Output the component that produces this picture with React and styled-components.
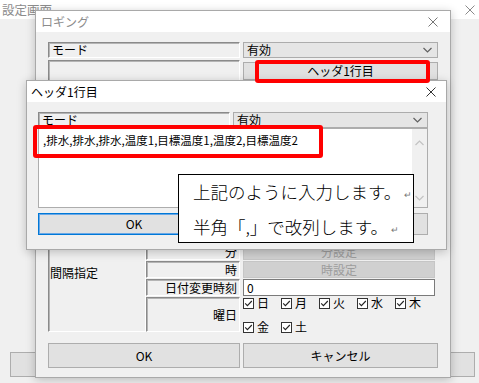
import React from 'react';
import styled, { createGlobalStyle } from 'styled-components';

const GlobalStyle = createGlobalStyle`
  html, body { margin: 0; padding: 0; background: #f0f0f0; }
  body {
    font-family: "Noto Sans CJK JP", "Noto Sans", sans-serif;
    font-size: 12px;
    color: #000;
    overflow: hidden;
  }
`;

const Desktop = styled.div`
  position: relative;
  width: 479px;
  height: 383px;
  overflow: hidden;
  background: #f0f0f0;
`;

// windows sit on a free canvas, so they are placed by coordinates
const Window = styled.div`
  position: absolute;
  left: ${p => p.$x}px;
  top: ${p => p.$y}px;
  width: ${p => p.$w}px;
  height: ${p => p.$h}px;
  box-sizing: border-box;
  display: flex;
  flex-direction: column;
  background: #f0f0f0;
  border: ${p => (p.$frameless ? 'none' : '1px solid #a9a9a9')};
  box-shadow: ${p => (p.$frameless ? 'none' : '0 2px 9px rgba(0,0,0,0.22)')};
`;

const TitleBar = styled.div`
  flex: none;
  height: ${p => p.$h}px;
  background: #fff;
  display: flex;
  align-items: center;
  justify-content: space-between;
  padding: 0 ${p => p.$pr}px 0 ${p => p.$pl}px;
  color: ${p => (p.$active ? '#000' : '#8c8c8c')};
  font-size: ${p => p.$fs || 12}px;
`;

const CloseIcon = ({ color = '#555' }) => (
  <svg width="10" height="10" viewBox="0 0 10 10">
    <path d="M0.5 0.5 L9.5 9.5 M9.5 0.5 L0.5 9.5" stroke={color} strokeWidth="1" fill="none" />
  </svg>
);

const Chevron = ({ up, color = '#606060' }) => (
  <svg width="9" height="6" viewBox="0 0 9 6">
    <path d={up ? 'M0.5 5 L4.5 1 L8.5 5' : 'M0.5 1 L4.5 5 L8.5 1'} stroke={color} strokeWidth="1.2" fill="none" />
  </svg>
);

/* back window */
const BackBody = styled.div`
  flex: 1;
  display: flex;
  align-items: flex-end;
  justify-content: space-between;
  padding: 0 4px 6px 10px;
`;

const BackButton = styled.div`
  width: 60px;
  height: 25px;
  box-sizing: border-box;
  background: #e1e1e1;
  border: 1px solid #adadad;
`;

/* shared controls */
const Row = styled.div`
  display: grid;
  grid-template-columns: 192px 195px;
  column-gap: 3px;
  height: ${p => p.$h}px;
  flex: none;
`;

const LabelBox = styled.div`
  box-sizing: border-box;
  height: 100%;
  border: 1px solid #fff;
  border-top-color: #8a8a8a;
  border-left-color: #8a8a8a;
  box-shadow: inset 1px 1px 0 #b4b4b4;
  display: flex;
  align-items: ${p => p.$align || 'center'};
  justify-content: ${p => (p.$right ? 'flex-end' : 'flex-start')};
  padding: ${p => p.$pad || '0 2px 0 3px'};
  line-height: 1;
  white-space: nowrap;
  overflow: hidden;
`;

const Select = styled.div`
  box-sizing: border-box;
  height: 100%;
  background: #e5e5e5;
  border: 1px solid #acacac;
  display: flex;
  align-items: center;
  justify-content: space-between;
  padding: 0 5px 0 3px;
  line-height: 1;
`;

const Button = styled.div`
  box-sizing: border-box;
  height: ${p => p.$h || 22}px;
  flex: none;
  background: ${p => (p.$disabled ? '#d0d0d0' : '#e1e1e1')};
  color: ${p => (p.$disabled ? '#9c9c9c' : '#000')};
  border: 1px solid ${p => (p.$focus ? '#0078d7' : p.$disabled ? '#c6c6c6' : '#adadad')};
  box-shadow: ${p => (p.$focus ? 'inset 0 0 0 1px #6aa8e6' : 'none')};
  display: flex;
  align-items: center;
  justify-content: center;
  line-height: 1;
  font-size: 12px;
`;

const TextInput = styled.div`
  box-sizing: border-box;
  height: 100%;
  background: #fff;
  border: 1px solid #7a7a7a;
  display: flex;
  align-items: center;
  padding-left: 3px;
  line-height: 1;
`;

/* logging window */
const LogBody = styled.div`
  flex: 1;
  display: flex;
  flex-direction: column;
  gap: 2px;
  padding: 10px 12px 9px 12px;
`;

const ButtonStack = styled.div`
  display: flex;
  flex-direction: column;
  gap: 2px;
  padding-top: 2px;
`;

const GroupGrid = styled.div`
  display: grid;
  grid-template-columns: 98px 94px 195px;
  grid-template-rows: 17px 17px 17px 35px;
  row-gap: 1px;
  height: 90px;
  flex: none;

  & > .right { margin-left: 3px; }
`;

const DayList = styled.div`
  display: flex;
  flex-wrap: wrap;
  row-gap: 12px;
  align-content: flex-start;
`;

const Day = styled.div`
  width: 38px;
  height: 12px;
  display: flex;
  align-items: center;
  gap: 3px;
  line-height: 1;
`;

const CheckBox = () => (
  <svg width="11" height="11" viewBox="0 0 11 11">
    <rect x="0.5" y="0.5" width="10" height="10" fill="#fff" stroke="#333" strokeWidth="1" />
    <path d="M2.2 5.4 L4.4 7.7 L8.8 3" stroke="#222" strokeWidth="1.1" fill="none" />
  </svg>
);

const ButtonRow = styled(Row)`
  margin-top: 8px;
`;

/* header dialog */
const DlgBody = styled.div`
  flex: 1;
  display: flex;
  flex-direction: column;
  padding: 10px 18px 0 11px;
`;

const TextArea = styled.div`
  box-sizing: border-box;
  height: 80px;
  flex: none;
  background: #fff;
  border: 1px solid #adadad;
  display: flex;
`;

const AreaText = styled.div`
  flex: 1;
  padding: 4px 4px;
  font-size: 11.5px;
  line-height: 14px;
  white-space: nowrap;
`;

const ScrollBar = styled.div`
  width: 15px;
  background: #f0f0f0;
  display: flex;
  flex-direction: column;
  align-items: center;
  justify-content: space-between;
  padding: 11px 0 6px;
`;

const DlgButtons = styled(Row)`
  margin-top: 5px;
`;

/* annotations on top */
const Marker = styled.div`
  position: absolute;
  left: ${p => p.$x}px;
  top: ${p => p.$y}px;
  width: ${p => p.$w}px;
  height: ${p => p.$h}px;
  box-sizing: border-box;
  border: 4px solid #ff0000;
  border-radius: 3px;
`;

const Callout = styled.div`
  position: absolute;
  left: 178px;
  top: 174px;
  width: 236px;
  height: 69px;
  box-sizing: border-box;
  background: #fff;
  border: 1px solid #000;
  padding: 4px 0 0 14px;
  display: flex;
  flex-direction: column;
  gap: 6px;
`;

const CalloutLine = styled.div`
  font-size: 17.5px;
  line-height: 25px;
  font-weight: 300;
  white-space: nowrap;
  color: #000;
`;

const Ret = styled.span`
  font-family: "DejaVu Sans", sans-serif;
  font-size: 9px;
  color: #777;
  margin-left: 3px;
  vertical-align: 1px;
`;

const days = ['日', '月', '火', '水', '木', '金', '土'];

export default function App() {
  return (
    <>
      <GlobalStyle />
      <Desktop>
        <Window $x={0} $y={0} $w={479} $h={383} $frameless>
          <TitleBar $h={19} $pl={2} $pr={4} $fs={12.5}>
            <span>設定画面</span>
            <CloseIcon color="#8a8a8a" />
          </TitleBar>
          <BackBody>
            <BackButton />
            <BackButton />
          </BackBody>
        </Window>

        <Window $x={35} $y={10} $w={416} $h={368}>
          <TitleBar $h={21} $pl={5} $pr={12}>
            <span>ロギング</span>
            <CloseIcon color="#777" />
          </TitleBar>
          <LogBody>
            <Row $h={16}>
              <LabelBox>モード</LabelBox>
              <Select>
                <span>有効</span>
                <Chevron />
              </Select>
            </Row>
            <Row $h={181}>
              <LabelBox />
              <ButtonStack>
                <Button $h={18}>ヘッダ1行目</Button>
                <Button $h={18}>ヘッダ2行目</Button>
                <Button $h={18}>ファイル名</Button>
              </ButtonStack>
            </Row>
            <GroupGrid>
              <LabelBox style={{ gridRow: '1 / 5' }} $align="flex-start" $pad="23px 2px 0 1px">
                間隔指定
              </LabelBox>
              <LabelBox $right>分</LabelBox>
              <div className="right"><Button $h={17} $disabled>分設定</Button></div>
              <LabelBox $right>時</LabelBox>
              <div className="right"><Button $h={17} $disabled>時設定</Button></div>
              <LabelBox $right>日付変更時刻</LabelBox>
              <div className="right"><TextInput>0</TextInput></div>
              <LabelBox $right>曜日</LabelBox>
              <DayList className="right">
                {days.map(d => (
                  <Day key={d}>
                    <CheckBox />
                    <span>{d}</span>
                  </Day>
                ))}
              </DayList>
            </GroupGrid>
            <ButtonRow $h={25}>
              <Button $h={25}>OK</Button>
              <Button $h={25}>キャンセル</Button>
            </ButtonRow>
          </LogBody>
        </Window>

        <Window $x={26} $y={80} $w={421} $h={170}>
          <TitleBar $h={21} $pl={4} $pr={10} $active>
            <span>ヘッダ1行目</span>
            <CloseIcon color="#333" />
          </TitleBar>
          <DlgBody>
            <Row $h={16}>
              <LabelBox>モード</LabelBox>
              <Select>
                <span>有効</span>
                <Chevron />
              </Select>
            </Row>
            <TextArea>
              <AreaText>,排水,排水,排水,温度1,目標温度1,温度2,目標温度2</AreaText>
              <ScrollBar>
                <Chevron up color="#c2c2c2" />
                <Chevron color="#c2c2c2" />
              </ScrollBar>
            </TextArea>
            <DlgButtons $h={22}>
              <Button $focus>OK</Button>
              <Button>キャンセル</Button>
            </DlgButtons>
          </DlgBody>
        </Window>

        <Marker $x={255} $y={60} $w={175} $h={23} />
        <Marker $x={33} $y={125} $w={290} $h={33} />

        <Callout>
          <CalloutLine>上記のように入力します。<Ret>↵</Ret></CalloutLine>
          <CalloutLine>半角「,」で改列します。<Ret>↵</Ret></CalloutLine>
        </Callout>
      </Desktop>
    </>
  );
}
